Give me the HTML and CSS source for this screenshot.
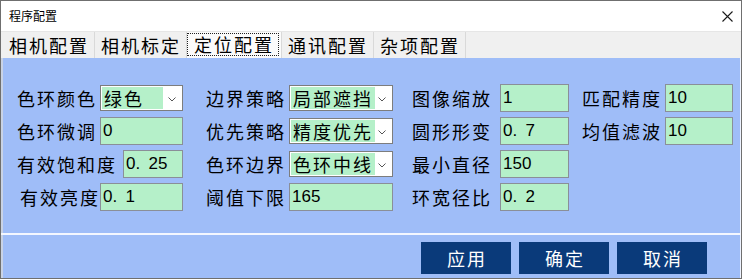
FILE: index.html
```html
<!DOCTYPE html>
<html lang="zh-CN">
<head>
<meta charset="utf-8">
<title>程序配置</title>
<link rel="stylesheet" href="styles.css">
</head>
<body>
<div class="window">
  <div class="titlebar">
    <span class="title">程序配置</span>
    <svg class="close" viewBox="0 0 11 11" width="11" height="11"><path d="M0.5 0.5 L10.5 10.5 M10.5 0.5 L0.5 10.5" stroke="#1a1a1a" stroke-width="1.1" fill="none"/></svg>
  </div>
  <div class="tabstrip">
    <div class="tab">相机配置</div>
    <div class="tab">相机标定</div>
    <div class="tab active"><span class="focus">定位配置</span></div>
    <div class="tab">通讯配置</div>
    <div class="tab">杂项配置</div>
  </div>
  <div class="page">
    <div class="form">
      <div class="label">色环颜色</div>
      <div class="select"><span class="val min">绿色</span><svg class="arrow" viewBox="0 0 8 5" width="8" height="5"><path d="M0.5 0.5 L4 4 L7.5 0.5" stroke="#555" fill="none"/></svg></div>
      <div class="label c2">边界策略</div>
      <div class="select"><span class="val">局部遮挡</span><svg class="arrow" viewBox="0 0 8 5" width="8" height="5"><path d="M0.5 0.5 L4 4 L7.5 0.5" stroke="#555" fill="none"/></svg></div>
      <div class="label c3">图像缩放</div>
      <div class="input">1</div>
      <div class="label c4">匹配精度</div>
      <div class="input">10</div>

      <div class="label">色环微调</div>
      <div class="input">0</div>
      <div class="label c2">优先策略</div>
      <div class="select"><span class="val">精度优先</span><svg class="arrow" viewBox="0 0 8 5" width="8" height="5"><path d="M0.5 0.5 L4 4 L7.5 0.5" stroke="#555" fill="none"/></svg></div>
      <div class="label c3">圆形形变</div>
      <div class="input">0<span class="dot">.</span>7</div>
      <div class="label c4">均值滤波</div>
      <div class="input">10</div>

      <div class="label">有效饱和度</div>
      <div class="input narrow">0<span class="dot">.</span>25</div>
      <div class="label c2">色环边界</div>
      <div class="select"><span class="val">色环中线</span><svg class="arrow" viewBox="0 0 8 5" width="8" height="5"><path d="M0.5 0.5 L4 4 L7.5 0.5" stroke="#555" fill="none"/></svg></div>
      <div class="label c3">最小直径</div>
      <div class="input">150</div>
      <div class="empty"></div>
      <div class="empty"></div>

      <div class="label indent">有效亮度</div>
      <div class="input">0<span class="dot">.</span>1</div>
      <div class="label c2">阈值下限</div>
      <div class="input">165</div>
      <div class="label c3">环宽径比</div>
      <div class="input">0<span class="dot">.</span>2</div>
      <div class="empty"></div>
      <div class="empty"></div>
    </div>
  </div>
  <div class="separator"></div>
  <div class="footer">
    <button class="btn" type="button">应用</button>
    <button class="btn" type="button">确定</button>
    <button class="btn" type="button">取消</button>
  </div>
</div>
</body>
</html>
```
FILE: styles.css
```css
* { box-sizing: border-box; }
html, body { margin: 0; padding: 0; }
body {
  width: 742px;
  height: 279px;
  overflow: hidden;
  background: #ffffff;
  font-family: "Noto Sans CJK SC", "Microsoft YaHei", sans-serif;
  color: #000;
}
.window {
  width: 742px;
  height: 279px;
  border: 1px solid #6f6f6f;
  display: flex;
  flex-direction: column;
  background: #f0f0f0;
}
.titlebar {
  flex: 0 0 30px;
  background: #ffffff;
  display: flex;
  align-items: center;
  justify-content: space-between;
  padding: 0 8px 0 8px;
  font-size: 12px;
  line-height: 12px;
}
.close { display: block; }
.tabstrip {
  flex: 0 0 27px;
  display: flex;
  padding-left: 2px;
  background: #f0f0f0;
  border-top: 1px solid #e6e6e6;
}
.tab {
  font-size: 18px;
  letter-spacing: 2px;
  padding: 1px 5px 0 6px;
  border-right: 1px solid #d9d9d9;
  display: flex;
  align-items: center;
  line-height: 21px;
  white-space: nowrap;
}
.tab.active {
  background: #fbfbfb;
  padding: 0 2px 0 0;
  align-items: flex-start;
}
.focus {
  margin-top: 1px;
  border: 1px dotted #222;
  padding: 0 4px 0 6px;
  line-height: 21px;
}
.page {
  flex: 0 0 175px;
  background: #9fbdf8;
  border-left: 2px solid #c9d3e6;
  border-right: 1px solid #eef3ff;
  padding: 26px 0 0 14px;
}
.form {
  display: grid;
  grid-template-columns: 83px 83px 106px 104px 107px 69px 96px 68px;
  grid-template-rows: 28px 28px 28px 28px;
  row-gap: 5px;
  align-items: center;
}
.label {
  font-size: 18px;
  letter-spacing: 2px;
  white-space: nowrap;
  line-height: 28px;
}
.label.c2 { padding-left: 23px; }
.label.c3 { padding-left: 19px; }
.label.c4 { padding-left: 13px; }
.label.indent { padding-left: 3px; }
.input {
  height: 28px;
  background: #b5f0c9;
  border: 1px solid #8a8f98;
  font-family: "Liberation Sans", Arial, sans-serif;
  font-size: 17px;
  line-height: 26px;
  padding-left: 2px;
  white-space: nowrap;
}
.input.narrow {
  width: 60px;
  justify-self: end;
}
.dot {
  display: inline-block;
  width: 13px;
}
.select {
  height: 26px;
  background: #ffffff;
  border: 1px solid #7d7d7d;
  display: flex;
  align-items: stretch;
  padding: 1px;
}
.select .val {
  background: #b5f0c9;
  font-size: 18px;
  letter-spacing: 2px;
  line-height: 22px;
  padding: 0 2px 0 2px;
  white-space: nowrap;
}
.select .val.min { min-width: 61px; }
.arrow {
  margin-left: auto;
  margin-right: 5px;
  align-self: center;
  margin-top: 2px;
}
.separator {
  flex: 0 0 2px;
  background: #f4f7ff;
}
.footer {
  flex: 0 0 43px;
  background: #9fbdf8;
  border-left: 2px solid #c9d3e6;
  border-right: 1px solid #eef3ff;
  display: flex;
  justify-content: flex-end;
  gap: 8px;
  padding: 7px 33px 0 0;
}
.btn {
  width: 90px;
  height: 32px;
  background: #0a3a7a;
  color: #ffffff;
  border: none;
  margin: 0;
  padding: 0 0 0 2px;
  font-family: "Noto Sans CJK SC", sans-serif;
  font-size: 18px;
  letter-spacing: 2px;
  line-height: 32px;
}
```
